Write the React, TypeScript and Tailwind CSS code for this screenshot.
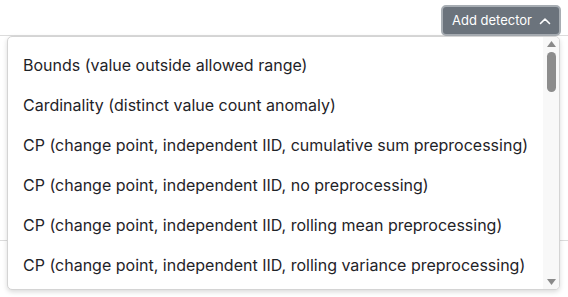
import React from "react";

const items = [
  "Bounds (value outside allowed range)",
  "Cardinality (distinct value count anomaly)",
  "CP (change point, independent IID, cumulative sum preprocessing)",
  "CP (change point, independent IID, no preprocessing)",
  "CP (change point, independent IID, rolling mean preprocessing)",
  "CP (change point, independent IID, rolling variance preprocessing)",
];

export default function App() {
  return (
    <div className="relative w-[568px] h-[297px] bg-white overflow-hidden" style={{ fontFamily: "Inter, 'Noto Sans', sans-serif" }}>
      <div className="flex justify-end pt-[5px] pr-[7px] h-[35px]">
        <button className="flex items-center gap-[7px] h-[31px] pl-[9px] pr-[8px] rounded-[5px] bg-[#6b737c] border-2 border-[#a7adb3] text-white text-[13px] leading-none">
          <span>Add detector</span>
          <svg width="12" height="8" viewBox="0 0 12 8" fill="none" stroke="white" strokeWidth="1.6" strokeLinecap="round" strokeLinejoin="round">
            <path d="M1.5 6.5L6 2L10.5 6.5" />
          </svg>
        </button>
      </div>
      <div className="border-t border-[#dcdcdc] h-[205px]" />
      <div className="border-t border-[#dcdcdc]" />

      <div className="absolute left-[7px] top-[36px] w-[553px] h-[254px] bg-white border border-[#d4d4d4] rounded-[5px] shadow-[0_2px_5px_rgba(0,0,0,0.15)] flex overflow-hidden">
        <div className="flex-1 flex flex-col pt-[8px]">
          {items.map((t) => (
            <div key={t} className="h-[40px] flex items-center pl-[15px] text-[16px] text-[#1f2328] whitespace-nowrap">
              {t}
            </div>
          ))}
        </div>
        <div className="w-[16px] bg-[#f8f8f8] flex flex-col items-center justify-between py-[4px]">
          <div className="flex flex-col items-center gap-[5px]">
            <svg width="9" height="6" viewBox="0 0 9 6"><path d="M4.5 0L9 6H0Z" fill="#8a8a8a" /></svg>
            <div className="w-[9px] h-[40px] rounded-full bg-[#8c8c8c]" />
          </div>
          <svg width="9" height="6" viewBox="0 0 9 6"><path d="M0 0H9L4.5 6Z" fill="#8a8a8a" /></svg>
        </div>
      </div>
    </div>
  );
}
